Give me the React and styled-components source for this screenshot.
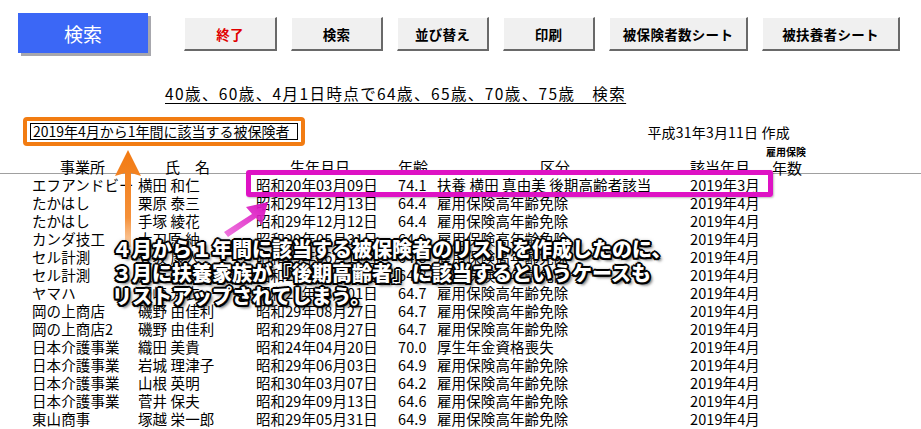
import React from "react";
import styled, { createGlobalStyle } from "styled-components";

const GlobalStyle = createGlobalStyle`
  html, body {
    margin: 0;
    padding: 0;
    background: #fff;
  }
  body {
    font-family: "Noto Sans CJK JP", "Noto Sans", sans-serif;
    color: #000;
  }
`;

const rows = [
  ["エフアンドビー", "横田 和仁", "昭和20年03月09日", "74.1", "扶養 横田 真由美 後期高齢者該当", "2019年3月"],
  ["たかはし", "栗原 泰三", "昭和29年12月13日", "64.4", "雇用保険高年齢免除", "2019年4月"],
  ["たかはし", "手塚 綾花", "昭和29年12月12日", "64.4", "雇用保険高年齢免除", "2019年4月"],
  ["カンダ技工", "大刀原 紬", "昭和29年05月31日", "64.9", "雇用保険高年齢免除", "2019年4月"],
  ["セル計測", "久坂 康人", "昭和29年06月17日", "64.8", "雇用保険高年齢免除", "2019年4月"],
  ["セル計測", "久坂 康人", "昭和29年06月17日", "64.8", "雇用保険高年齢免除", "2019年4月"],
  ["ヤマハ", "岡崎 芳衣", "昭和29年08月01日", "64.7", "雇用保険高年齢免除", "2019年4月"],
  ["岡の上商店", "磯野 由佳利", "昭和29年08月27日", "64.7", "雇用保険高年齢免除", "2019年4月"],
  ["岡の上商店2", "磯野 由佳利", "昭和29年08月27日", "64.7", "雇用保険高年齢免除", "2019年4月"],
  ["日本介護事業", "織田 美貴", "昭和24年04月20日", "70.0", "厚生年金資格喪失", "2019年4月"],
  ["日本介護事業", "岩城 理津子", "昭和29年06月03日", "64.9", "雇用保険高年齢免除", "2019年4月"],
  ["日本介護事業", "山根 英明", "昭和30年03月07日", "64.2", "雇用保険高年齢免除", "2019年4月"],
  ["日本介護事業", "菅井 保夫", "昭和29年09月13日", "64.6", "雇用保険高年齢免除", "2019年4月"],
  ["東山商事", "塚越 栄一郎", "昭和29年05月31日", "64.9", "雇用保険高年齢免除", "2019年4月"],
];

const buttons = [
  { label: "終了", width: 93, danger: true },
  { label: "検索", width: 92 },
  { label: "並び替え", width: 92 },
  { label: "印刷", width: 92 },
  { label: "被保険者数シート", width: 139 },
  { label: "被扶養者シート", width: 138 },
];

const App = () => {
  return (
    <Page>
      <GlobalStyle />
      <Toolbar>
        <MainButton>検索</MainButton>
        <ButtonGroup>
          {buttons.map((b) => (
            <SheetButton key={b.label} $w={b.width} $danger={b.danger}>
              {b.label}
            </SheetButton>
          ))}
        </ButtonGroup>
      </Toolbar>

      <LinkLine>
        <a>40歳、60歳、4月1日時点で64歳、65歳、70歳、75歳　検索</a>
      </LinkLine>

      <InfoRow>
        <TitleBox>
          <span>2019年4月から1年間に該当する被保険者</span>
        </TitleBox>
        <Created>平成31年3月11日 作成</Created>
      </InfoRow>

      <HeaderRow>
        <HeadCell $pad={28}>事業所</HeadCell>
        <HeadCell $pad={27}>氏　名</HeadCell>
        <HeadCell $pad={34}>生年月日</HeadCell>
        <HeadCell $pad={0}>年齢</HeadCell>
        <HeadCell $pad={103}>区分</HeadCell>
        <HeadCell $pad={0}>該当年月</HeadCell>
        <HeadCell $pad={0}>
          <Small>雇用保険</Small>
          <Years>年数</Years>
        </HeadCell>
      </HeaderRow>

      <Body>
        {rows.map((r, i) => (
          <Row key={i}>
            {r.map((c, j) => (
              <Cell key={j}>{c}</Cell>
            ))}
          </Row>
        ))}
      </Body>

      <Highlight />

      <OrangeArrow width="30" height="100" viewBox="0 0 30 100">
        <defs>
          <linearGradient id="og" x1="0" y1="0" x2="0" y2="1">
            <stop offset="0" stopColor="#f27a12" />
            <stop offset="0.7" stopColor="#f5913a" />
            <stop offset="1" stopColor="#f8b070" stopOpacity="0.6" />
          </linearGradient>
        </defs>
        <polygon points="15,1 28,27 18,24 18,98 12,98 12,24 2,27" fill="url(#og)" />
      </OrangeArrow>

      <PinkArrow width="50" height="40" viewBox="0 0 50 40">
        <defs>
          <linearGradient id="pg" x1="0" y1="1" x2="1" y2="0">
            <stop offset="0" stopColor="#e83fd0" stopOpacity="0.7" />
            <stop offset="1" stopColor="#d811bf" />
          </linearGradient>
        </defs>
        <polygon points="46,3 40,26 34,19 6,38 2,33 30,15 24,8" fill="url(#pg)" />
      </PinkArrow>

      <Caption>
        ４月から１年間に該当する被保険者のリストを作成したのに、
        <br />
        ３月に扶養家族が『後期高齢者』に該当するというケースも
        <br />
        リストアップされてしまう。
      </Caption>
    </Page>
  );
};

export default App;

const Page = styled.div`
  position: relative;
  width: 921px;
  height: 429px;
  overflow: hidden;
  background: #fff;
`;

const Toolbar = styled.div`
  display: flex;
  align-items: flex-start;
  padding: 13px 0 0 18px;
`;

const MainButton = styled.div`
  width: 130px;
  height: 40px;
  background: #3b67f6;
  color: #fff;
  font-size: 19px;
  display: flex;
  align-items: center;
  justify-content: center;
  box-shadow: 3px 3px 0 #a7a7ad;
`;

const ButtonGroup = styled.div`
  display: flex;
  gap: 14px;
  margin: 4px 0 0 36px;
`;

const SheetButton = styled.div`
  width: ${(p) => p.$w}px;
  height: 34px;
  box-sizing: border-box;
  background: #f0f0f0;
  border-top: 1px solid #ffffff;
  border-left: 1px solid #ffffff;
  border-right: 2px solid #696969;
  border-bottom: 2px solid #696969;
  display: flex;
  align-items: center;
  justify-content: center;
  font-size: 13.5px;
  font-weight: 700;
  letter-spacing: 0.3px;
  color: ${(p) => (p.$danger ? "#e00000" : "#000")};
`;

const LinkLine = styled.div`
  margin-top: 30px;
  height: 20px;
  line-height: 20px;
  padding-left: 165px;
  font-size: 15.5px;
  letter-spacing: 1.4px;

  a {
    text-decoration: underline;
    text-underline-offset: 3px;
  }
`;

const InfoRow = styled.div`
  display: flex;
  align-items: center;
  justify-content: space-between;
  margin-top: 14px;
  padding: 0 131px 0 23px;
`;

const TitleBox = styled.div`
  width: 282px;
  height: 29px;
  box-sizing: border-box;
  border: 4px solid #f27c12;
  border-radius: 4px;
  padding: 2px 3px;
  display: flex;

  span {
    flex: 1;
    border: 1px solid #000;
    font-size: 14px;
    line-height: 15px;
    padding-left: 2px;
    white-space: nowrap;
  }
`;

const Created = styled.div`
  font-size: 14px;
  letter-spacing: 0.2px;
`;

const HeaderRow = styled.div`
  display: grid;
  grid-template-columns: 106px 118px 142px 39px 253px 76px 60px;
  align-items: end;
  height: 27px;
  padding-left: 32px;
  border-bottom: 1px solid #a0a0a0;
`;

const HeadCell = styled.div`
  padding-left: ${(p) => p.$pad}px;
  font-size: 15px;
  line-height: 18px;
  white-space: nowrap;
  display: flex;
  flex-direction: column;
  align-items: flex-start;
`;

const Small = styled.span`
  font-size: 10px;
  font-weight: 700;
  line-height: 12px;
  margin-bottom: 2px;
`;

const Years = styled.span`
  padding-left: 6px;
  line-height: 16px;
`;

const Body = styled.div`
  padding-top: 2px;
`;

const Row = styled.div`
  display: grid;
  grid-template-columns: 106px 118px 142px 39px 253px 80px;
  height: 18px;
  padding-left: 32px;
  font-size: 14.5px;
  line-height: 18px;
`;

const Cell = styled.div`
  white-space: nowrap;
  letter-spacing: 0.1px;
`;

const Highlight = styled.div`
  position: absolute;
  left: 246px;
  top: 170px;
  width: 527px;
  height: 27px;
  box-sizing: border-box;
  border: 5px solid #de12c4;
  border-radius: 3px;
  box-shadow: 1px 1px 2px rgba(0, 0, 0, 0.25);
`;

const OrangeArrow = styled.svg`
  position: absolute;
  left: 113px;
  top: 149px;
`;

const PinkArrow = styled.svg`
  position: absolute;
  left: 222px;
  top: 199px;
`;

const Caption = styled.div`
  position: absolute;
  left: 112px;
  top: 237px;
  font-size: 20px;
  font-weight: 900;
  line-height: 23.5px;
  color: #fff;
  white-space: nowrap;
  text-shadow:
    2px 0 0 #000, -2px 0 0 #000, 0 2px 0 #000, 0 -2px 0 #000,
    1.5px 1.5px 0 #000, -1.5px 1.5px 0 #000, 1.5px -1.5px 0 #000, -1.5px -1.5px 0 #000,
    3px 3px 3px rgba(0, 0, 0, 0.55), 0 0 4px rgba(0, 0, 0, 0.6);
`;
